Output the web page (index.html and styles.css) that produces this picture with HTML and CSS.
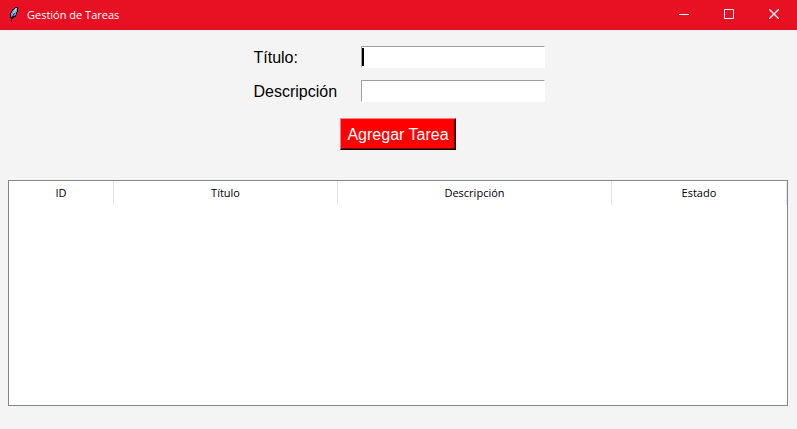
FILE: index.html
```html
<!DOCTYPE html>
<html lang="es">
<head>
<meta charset="utf-8">
<title>Gestión de Tareas</title>
<link rel="stylesheet" href="styles.css">
</head>
<body>
<header class="titlebar">
  <svg class="feather" width="16" height="18" viewBox="0 0 16 18" aria-hidden="true">
    <path d="M9 1H12V6H11V9H10V11H8V12H7V13H6V16H5V12H4V7H5V5H6V3H8V2H9Z" fill="#10101c"/>
    <path d="M9 2H11V6H10V9H9V10H7V11H5V7H6V5H7V4H8V3H9Z" fill="#5f9fe4"/>
    <path d="M10.500 2L8.500 5.500L6.500 9.500" fill="none" stroke="#d4e6fa"/>
    <path d="M8.500 7L5.500 12" fill="none" stroke="#10101c"/>
  </svg>
  <h1 class="caption">Gestión de Tareas</h1>
  <div class="controls">
    <button class="control" type="button" aria-label="Minimizar">
      <svg width="10" height="10" viewBox="0 0 10 10"><path d="M0 5.500H10"/></svg>
    </button>
    <button class="control" type="button" aria-label="Maximizar">
      <svg width="10" height="10" viewBox="0 0 10 10"><path d="M.5 .5H9.500V9.500H.5Z"/></svg>
    </button>
    <button class="control" type="button" aria-label="Cerrar">
      <svg width="10" height="10" viewBox="0 0 10 10"><path class="cross" d="M.3 .3L9.700 9.700M9.700 .3L.3 9.700"/></svg>
    </button>
  </div>
</header>
<main class="content">
  <form class="task-form">
    <div class="fields">
      <label for="titulo">Título:</label>
      <input class="entry entry-active" id="titulo" type="text">
      <label for="descripcion">Descripción</label>
      <input class="entry" id="descripcion" type="text">
    </div>
    <button class="add" type="button">Agregar Tarea</button>
  </form>
  <div class="tree">
    <table class="tasks">
      <colgroup><col class="col-id"><col class="col-title"><col class="col-desc"><col class="col-state"></colgroup>
      <thead>
        <tr><th scope="col">ID</th><th scope="col">Título</th><th scope="col">Descripción</th><th scope="col">Estado</th></tr>
      </thead>
      <tbody></tbody>
    </table>
  </div>
</main>
</body>
</html>
```
FILE: styles.css
```css
* { box-sizing: border-box; }

body {
  margin: 0;
  min-height: 100vh;
  display: flex;
  flex-direction: column;
  background: #f4f4f4;
  color: #000;
  font-family: "Open Sans", "Noto Sans", sans-serif;
}

.titlebar {
  display: flex;
  align-items: center;
  height: 30px;
  padding-left: 6px;
  background: #e81123;
  color: #fff;
}

.feather { margin-right: 5px; }

.caption {
  margin: 0;
  flex: 1;
  font-size: 11px;
  font-weight: 400;
  line-height: 30px;
}

.controls {
  display: flex;
  align-self: flex-start;
  height: 28px;
  padding-right: 1px;
}

.control {
  display: flex;
  align-items: center;
  justify-content: center;
  width: 45px;
  padding: 0;
  border: 0;
  background: none;
}

.control svg { fill: none; stroke: #fff; }

.control .cross { stroke-width: 1.300; }

.content {
  flex: 1;
  display: flex;
  flex-direction: column;
  padding: 16px 9px 23px 8px;
}

.task-form {
  display: flex;
  flex-direction: column;
  align-items: center;
  gap: 16px;
  margin-bottom: 30px;
  font-family: "Liberation Sans", Arial, sans-serif;
  font-size: 16px;
}

.fields {
  display: grid;
  grid-template-columns: 109px 184px;
  grid-auto-rows: 22px;
  row-gap: 12px;
  line-height: 24px;
}

.fields label { padding-left: 2px; }

.entry {
  width: 100%;
  height: 22px;
  padding: 0 2px;
  border: 1px solid #fff;
  border-top-color: #a0a0a0;
  border-left-color: #a0a0a0;
  background-color: #fff;
  font: inherit;
  outline: 0;
}

/* Wide insertion bar of the active field */
.entry-active {
  background-image: linear-gradient(#000, #000);
  background-repeat: no-repeat;
  background-position: 0 1px;
  background-size: 2px 18px;
}

.add {
  height: 32px;
  padding: 2px 6px 0;
  border: 1px solid #000;
  border-top-color: #ff8080;
  border-left-color: #ff8080;
  box-shadow: inset -1px -1px #800000;
  background: #f00;
  color: #fff;
  font: inherit;
}

.tree {
  flex: 1;
  border: 1px solid #828790;
  background: #fff;
}

.tasks {
  width: 100%;
  table-layout: fixed;
  border-collapse: separate;
  border-spacing: 0;
  font-size: 11px;
}

.col-id { width: 13.500%; }
.col-title { width: 28.800%; }
.col-desc { width: 35.200%; }
.col-state { width: 22.500%; }

.tasks th {
  height: 24px;
  padding: 0 0 2px;
  border-right: 1px solid #e5e5e5;
  font-weight: 400;
}
```
